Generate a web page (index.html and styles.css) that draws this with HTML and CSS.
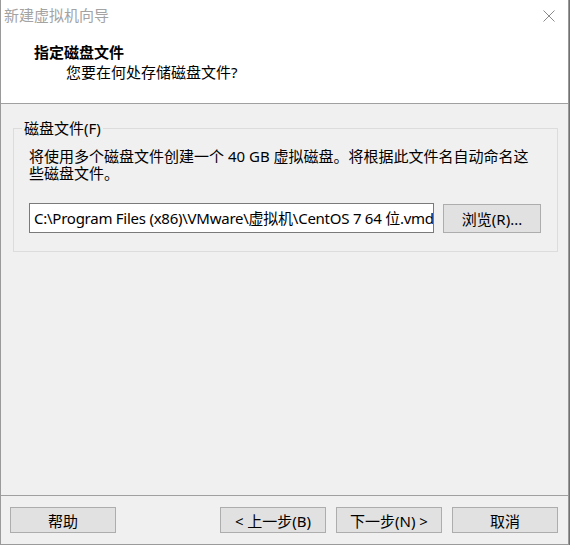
FILE: index.html
```html
<!DOCTYPE html>
<html lang="zh-CN">
<head>
<meta charset="utf-8">
<title>新建虚拟机向导</title>
<link rel="stylesheet" href="styles.css">
</head>
<body>
<div class="window">
  <div class="top">
    <div class="titlebar">
      <span class="title">新建虚拟机向导</span>
      <svg class="close" width="12" height="12" viewBox="0 0 12 12"><path d="M0.5 0.5 L11.5 11.5 M11.5 0.5 L0.5 11.5" stroke="#8a8a8a" stroke-width="1" fill="none"/></svg>
    </div>
    <div class="header">
      <div class="h-title">指定磁盘文件</div>
      <div class="h-sub">您要在何处存储磁盘文件?</div>
    </div>
  </div>
  <div class="body">
    <div class="group">
      <span class="legend">磁盘文件(F)</span>
      <p class="desc">将使用多个磁盘文件创建一个 40 GB 虚拟磁盘。将根据此文件名自动命名这些磁盘文件。</p>
      <div class="row">
        <div class="input"><span>C:\Program Files (x86)\VMware\虚拟机\CentOS 7 64 位.vmdk</span></div>
        <div class="btn browse">浏览(R)...</div>
      </div>
    </div>
  </div>
  <div class="footer">
    <div class="btn">帮助</div>
    <div class="spacer"></div>
    <div class="btn">&lt; 上一步(B)</div>
    <div class="btn">下一步(N) &gt;</div>
    <div class="btn">取消</div>
  </div>
</div>
</body>
</html>
```

FILE: styles.css
```css
* { box-sizing: border-box; }
html, body { margin: 0; padding: 0; }
body {
  background: #6b7280;
  width: 570px;
  height: 545px;
  overflow: hidden;
  font-family: "Noto Sans", "Noto Sans CJK SC", sans-serif;
  font-size: 15px;
  color: #000;
}
.window {
  width: 569px;
  height: 545px;
  background: #f0f0f0;
  border-left: 1px solid #9a9a9a;
  border-right: 1px solid #9a9a9a;
  border-bottom: 1px solid #9a9a9a;
  display: flex;
  flex-direction: column;
}
.top {
  background: #fff;
  height: 104px;
  border-bottom: 1px solid #a0a0a0;
}
.titlebar {
  height: 31px;
  display: flex;
  align-items: center;
  justify-content: space-between;
  padding-left: 3px;
  padding-right: 13px;
}
.title {
  color: #a3a3a3;
  line-height: 31px;
}
.close { display: block; }
.header {
  padding-top: 11px;
}
.h-title {
  font-weight: bold;
  line-height: 20px;
  padding-left: 33px;
}
.h-sub {
  line-height: 20px;
  padding-left: 65px;
}
.body {
  flex: 1;
  padding: 24px 10px 0 12px;
  border-bottom: 1px solid #a0a0a0;
}
.group {
  position: relative;
  border: 1px solid #dcdcdc;
  height: 124px;
  padding: 19px 15px 0 15px;
}
.legend {
  position: absolute;
  top: -11px;
  left: 8px;
  padding: 0 2px;
  background: #f0f0f0;
  line-height: 20px;
}
.desc {
  margin: 0;
  line-height: 17px;
  width: 505px;
}
.row {
  display: flex;
  align-items: flex-start;
  margin-top: 21px;
  gap: 9px;
}
.input {
  width: 405px;
  height: 30px;
  background: #fff;
  border: 1px solid #7a7a7a;
  overflow: hidden;
  white-space: nowrap;
  padding-left: 4px;
  line-height: 28px;
  letter-spacing: -0.25px;
}
.btn {
  height: 26px;
  width: 106px;
  background: #e1e1e1;
  border: 1px solid #adadad;
  display: flex;
  align-items: center;
  justify-content: center;
  white-space: nowrap;
}
.browse {
  width: 98px;
  height: 29px;
  margin-top: 1px;
}
.footer {
  height: 48px;
  display: flex;
  align-items: flex-start;
  padding: 11px 10px 0 9px;
  gap: 10px;
}
.spacer { flex: 1; }
```
